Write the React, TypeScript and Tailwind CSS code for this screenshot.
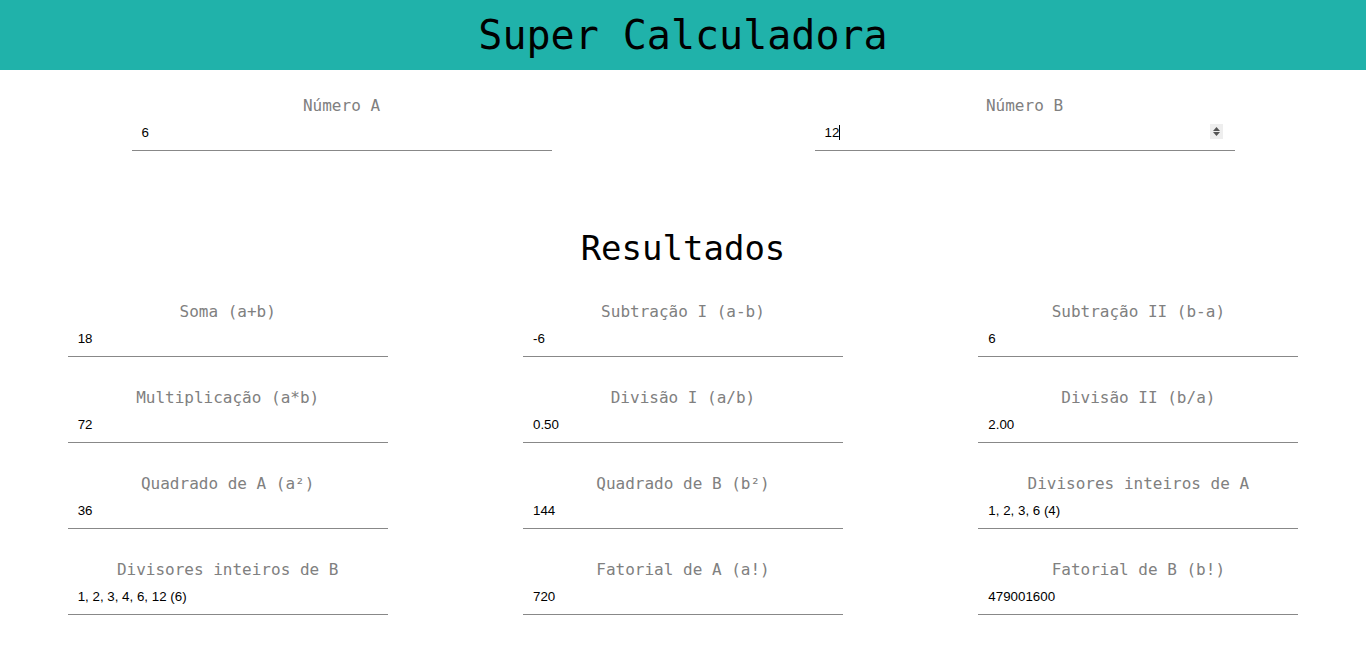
import React from "react";

const mono = { fontFamily: '"DejaVu Sans Mono", "Liberation Mono", monospace' };

function Field({ label, value, width, spinner, caret }: { label: string; value: string; width: string; spinner?: boolean; caret?: boolean }) {
  return (
    <div className="flex flex-col items-center">
      <label className="text-[16px] leading-[19px] text-[#808080] font-['DejaVu_Sans_Mono',monospace]">{label}</label>
      <div className={`relative ${width} h-[36px] border-b border-[#888888] flex items-center px-[10px]`}>
        <span className="text-[13.33px] text-black font-['Liberation_Sans',Arial,sans-serif] leading-none">{value}</span>
        {caret && <span className="w-px h-[15px] bg-black" />}
        {spinner && (
          <div className="absolute right-[12px] top-[9px] w-[13px] h-[15px] bg-[#eeeeee] flex flex-col items-center justify-center gap-[1px]">
            <svg width="7" height="4" viewBox="0 0 7 4"><path d="M0 4 L3.5 0 L7 4 Z" fill="#555" /></svg>
            <svg width="7" height="4" viewBox="0 0 7 4"><path d="M0 0 L3.5 4 L7 0 Z" fill="#555" /></svg>
          </div>
        )}
      </div>
    </div>
  );
}

const results: [string, string][] = [
  ["Soma (a+b)", "18"],
  ["Subtração I (a-b)", "-6"],
  ["Subtração II (b-a)", "6"],
  ["Multiplicação (a*b)", "72"],
  ["Divisão I (a/b)", "0.50"],
  ["Divisão II (b/a)", "2.00"],
  ["Quadrado de A (a²)", "36"],
  ["Quadrado de B (b²)", "144"],
  ["Divisores inteiros de A", "1, 2, 3, 6 (4)"],
  ["Divisores inteiros de B", "1, 2, 3, 4, 6, 12 (6)"],
  ["Fatorial de A (a!)", "720"],
  ["Fatorial de B (b!)", "479001600"],
];

export default function App() {
  return (
    <div className="w-full min-h-[651px] bg-white" style={mono}>
      <header className="h-[70px] bg-[#20b2aa] flex items-center justify-center">
        <h1 className="text-[40px] leading-none font-normal text-black font-['DejaVu_Sans_Mono',monospace] pb-[1px]">Super Calculadora</h1>
      </header>
      <section className="grid grid-cols-2 pt-[26px]">
        <Field label="Número A" value="6" width="w-[420px]" />
        <Field label="Número B" value="12" width="w-[420px]" spinner caret />
      </section>
      <h2 className="mt-[77px] text-[34px] leading-[40px] text-center font-normal text-black font-['DejaVu_Sans_Mono',monospace]">Resultados</h2>
      <section className="grid grid-cols-3 gap-y-[31px] mt-[34px] pb-[36px]">
        {results.map(([l, v]) => (
          <Field key={l} label={l} value={v} width="w-[320px]" />
        ))}
      </section>
    </div>
  );
}
